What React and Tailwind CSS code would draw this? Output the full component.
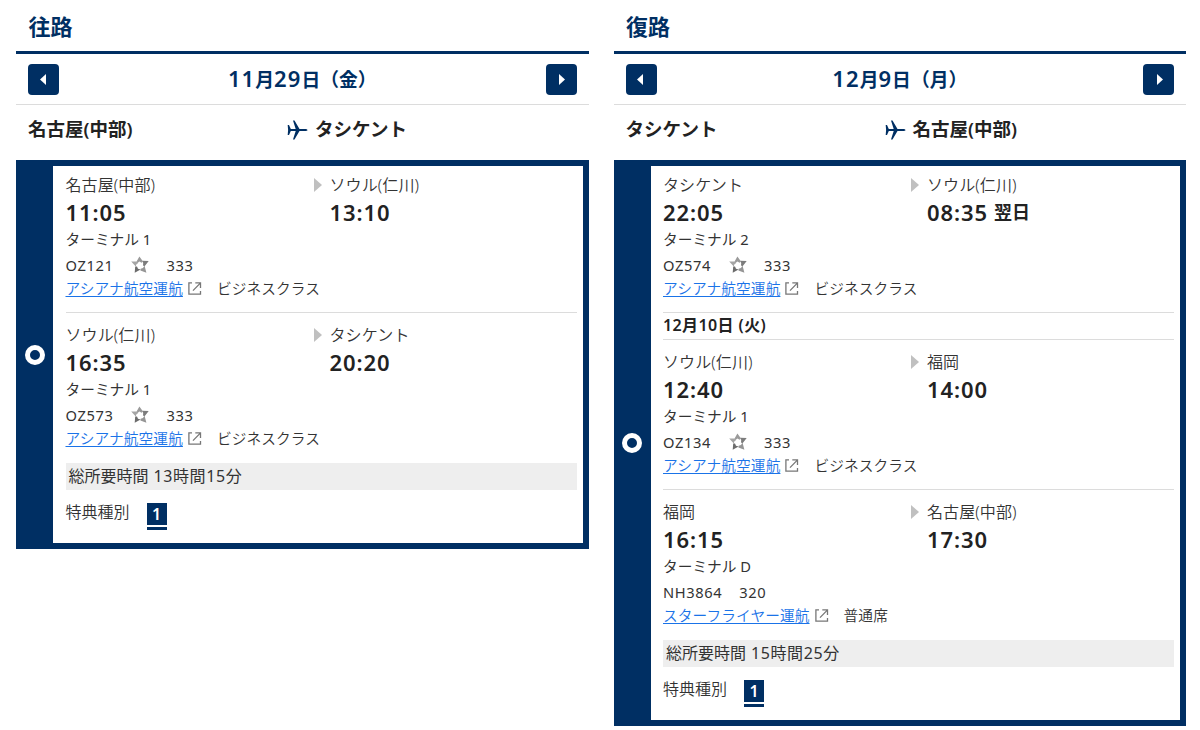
import React from 'react';

const itineraries = [
  {
    title: '往路',
    date: [['11', '月'], ['29', '日（金）']],
    from: '名古屋(中部)',
    to: 'タシケント',
    total: ['総所要時間', '13時間15分'],
    segments: [
      { from: '名古屋(中部)', to: 'ソウル(仁川)', dep: '11:05', arr: '13:10', terminal: 'ターミナル 1', flight: 'OZ121', star: true, plane: '333', airline: 'アシアナ航空運航', cabin: 'ビジネスクラス' },
      { from: 'ソウル(仁川)', to: 'タシケント', dep: '16:35', arr: '20:20', terminal: 'ターミナル 1', flight: 'OZ573', star: true, plane: '333', airline: 'アシアナ航空運航', cabin: 'ビジネスクラス' },
    ],
  },
  {
    title: '復路',
    date: [['12', '月'], ['9', '日（月）']],
    from: 'タシケント',
    to: '名古屋(中部)',
    total: ['総所要時間', '15時間25分'],
    segments: [
      { from: 'タシケント', to: 'ソウル(仁川)', dep: '22:05', arr: '08:35', note: '翌日', terminal: 'ターミナル 2', flight: 'OZ574', star: true, plane: '333', airline: 'アシアナ航空運航', cabin: 'ビジネスクラス' },
      { day: '12月10日 (火)', from: 'ソウル(仁川)', to: '福岡', dep: '12:40', arr: '14:00', terminal: 'ターミナル 1', flight: 'OZ134', star: true, plane: '333', airline: 'アシアナ航空運航', cabin: 'ビジネスクラス' },
      { from: '福岡', to: '名古屋(中部)', dep: '16:15', arr: '17:30', terminal: 'ターミナル D', flight: 'NH3864', plane: '320', airline: 'スターフライヤー運航', cabin: '普通席' },
    ],
  },
];

const PlaneIcon = () => (
  <svg width="22" height="20" viewBox="0 0 22 20" fill="#002f63">
    <path d="M0.7 5h1.3l1.8 4h4.9L6 0.6h1.5l5 8.3h5c2 0 3 .6 3 1.1s-1 1.1-3 1.1h-5l-5 8.3H6L8.7 11H3.8l-1.8 4H.7l.4-5z" />
  </svg>
);

// Star Alliance style mark: five shaded wedges round an open centre
const AllianceIcon = () => (
  <svg width="18" height="18" viewBox="0 0 18 18">
    <path d="M5.6 5.6 8.4.4l3.6 5.2-1.3 1.2-2.4-1.2-2 1.6z" fill="#9a9a9a" />
    <path d="M11.4 4.8 17.7 5l-4.1 5.2-1.6-.6.2-2.6z" fill="#7c7c7c" />
    <path d="M13.5 9.6l1.9 7.2-6-2.4.2-1.7 2.4-.8z" fill="#959595" />
    <path d="M9.6 13.6l-5.9 3.2.5-6.2 1.8-.2 1 2.3z" fill="#6c6c6c" />
    <path d="M4.8 10.6.2 5.6l6.4-.2.5 1.6-1.8 1.6z" fill="#a5a5a5" />
  </svg>
);

const ExternalIcon = () => (
  <svg width="14" height="13" viewBox="0 0 14 13" fill="none" stroke="#777" strokeWidth="1.3">
    <path d="M4 .9H.9v11.3h11.6V9" />
    <path d="M7.3.9h5.2v5M12.3 1.1 5 8.6" />
  </svg>
);

const NavButton = ({ next }) => (
  <button className="flex h-[31px] w-[31px] items-center justify-center rounded bg-[#002f63]">
    <svg width="6" height="11" viewBox="0 0 6 11" fill="#fff" className={next ? 'ml-0.5 rotate-180' : 'mr-0.5'}>
      <path d="M6 0v11L0 5.5z" />
    </svg>
  </button>
);

const Segment = ({ data, first }) => (
  <div className={first ? 'pt-2' : 'border-t border-[#dcdcdc]'}>
    {data.day && (
      <div className="flex h-[27px] items-center border-b border-[#dcdcdc] pb-[3px] text-[16px] font-semibold tracking-[0.4px] text-[#222]">{data.day}</div>
    )}
    <div className={first ? '' : 'pt-[11px]'}>
      <div className="flex h-[22px] items-center pb-px text-[16px] tracking-[0.1px]">
        <span className="w-[248px]">{data.from}</span>
        <svg width="8" height="14" viewBox="0 0 8 14" fill="#c0c0c0">
          <path d="M0 0 8 7 0 14z" />
        </svg>
        <span className="ml-2">{data.to}</span>
      </div>
      <div className="flex h-[33px] items-center text-[22px] font-semibold tracking-[0.9px] text-[#222]">
        <span className="w-[264px]">{data.dep}</span>
        <span>{data.arr}</span>
        {data.note && <span className="ml-1.5 text-[18px] tracking-normal">{data.note}</span>}
      </div>
      <div className="flex h-[21px] items-center pb-px text-[14.7px] font-normal">{data.terminal}</div>
      <div className="mt-[3px] flex h-6 items-center text-[14.7px] font-normal tracking-[0.6px]">
        <span>{data.flight}</span>
        {data.star && <span className="ml-[18px]"><AllianceIcon /></span>}
        <span className="ml-[17px]">{data.plane}</span>
      </div>
      <div className="flex h-[22px] items-center text-[14.7px] tracking-[0.1px]">
        <a className="text-[#1a73e8] underline underline-offset-2">{data.airline}</a>
        <span className="ml-[5px]"><ExternalIcon /></span>
        <span className="ml-[15px]">{data.cabin}</span>
      </div>
    </div>
    <div className="h-[13px]" />
  </div>
);

const Itinerary = ({ trip }) => (
  <section className="flex-1">
    <h2 className="flex h-[54px] items-center border-b-[3px] border-[#002f63] pl-[12.5px] pt-px text-[22px] font-bold text-[#002f63]">{trip.title}</h2>
    <div className="flex h-[51px] items-center justify-between border-b border-[#dcdcdc] px-3">
      <NavButton />
      <div className="flex items-baseline pb-px text-[18.8px] font-semibold text-[#002f63]">
        {trip.date.map(([num, unit]) => (
          <React.Fragment key={unit}>
            <span className="text-[22px] tracking-[1.1px]">{num}</span>
            <span>{unit}</span>
          </React.Fragment>
        ))}
      </div>
      <NavButton next />
    </div>
    <div className="flex h-[55px] items-center pb-2 pl-3 text-[18.5px] font-semibold text-[#222]">
      <span className="w-[259px]">{trip.from}</span>
      <span className="pt-0.5"><PlaneIcon /></span>
      <span className="ml-1.5">{trip.to}</span>
    </div>
    <div className="flex border-y-6 border-r-6 border-[#002f63]">
      <div className="flex w-[37px] items-center justify-center bg-[#002f63]">
        <span className="h-5 w-5 rounded-full border-5 border-white" />
      </div>
      <div className="flex-1 pl-[12.5px] pr-1.5 font-[350] text-[#333]">
        {trip.segments.map((data, i) => (
          <Segment key={data.flight} data={data} first={i === 0} />
        ))}
        <div className="mt-px flex h-[27px] items-center gap-[5px] bg-[#eee] pb-0.5 pl-[3px] text-[16px] font-normal">
          <span>{trip.total[0]}</span>
          <span className="tracking-[0.6px]">{trip.total[1]}</span>
        </div>
        <div className="flex h-[53px] pt-[11px] text-[16px]">
          <span className="leading-[22px]">特典種別</span>
          <div className="ml-[17px] mt-0.5 w-5">
            <div className="flex h-[22px] items-center justify-center bg-[#002f63] font-semibold text-white">1</div>
            <div className="mt-0.5 h-[3px] bg-[#002f63]" />
          </div>
        </div>
      </div>
    </div>
  </section>
);

export default function App() {
  return (
    <div className="flex h-[730px] items-start gap-[25px] overflow-hidden bg-white pl-4 pr-3.5 font-['Noto_Sans','Noto_Sans_CJK_JP',sans-serif]">
      {itineraries.map((trip) => (
        <Itinerary key={trip.title} trip={trip} />
      ))}
    </div>
  );
}
